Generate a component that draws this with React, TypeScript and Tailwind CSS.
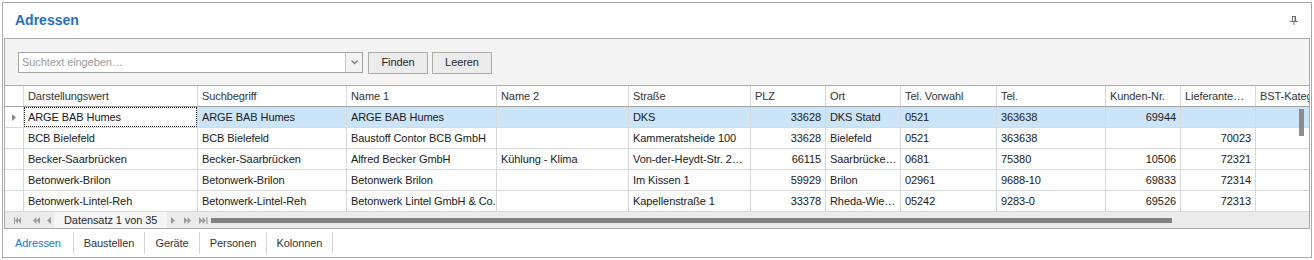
import React from 'react';

type Col = { key: string; label: string; w: string; right?: boolean };

const cols: Col[] = [
  { key: 'dw', label: 'Darstellungswert', w: 'w-[174px]' },
  { key: 'sb', label: 'Suchbegriff', w: 'w-[149px]' },
  { key: 'n1', label: 'Name 1', w: 'w-[150px]' },
  { key: 'n2', label: 'Name 2', w: 'w-[132px]' },
  { key: 'str', label: 'Straße', w: 'w-[122px]' },
  { key: 'plz', label: 'PLZ', w: 'w-[75px]', right: true },
  { key: 'ort', label: 'Ort', w: 'w-[75px]' },
  { key: 'vw', label: 'Tel. Vorwahl', w: 'w-[96px]' },
  { key: 'tel', label: 'Tel.', w: 'w-[109px]' },
  { key: 'kn', label: 'Kunden-Nr.', w: 'w-[75px]', right: true },
  { key: 'ln', label: 'Lieferante…', w: 'w-[75px]', right: true },
  { key: 'bst', label: 'BST-Kateg', w: 'w-[75px]' },
];

const rows: Record<string, string>[] = [
  { dw: 'ARGE BAB Humes', sb: 'ARGE BAB Humes', n1: 'ARGE BAB Humes', n2: '', str: 'DKS', plz: '33628', ort: 'DKS Statd', vw: '0521', tel: '363638', kn: '69944', ln: '', bst: '' },
  { dw: 'BCB Bielefeld', sb: 'BCB Bielefeld', n1: 'Baustoff Contor BCB GmbH', n2: '', str: 'Kammeratsheide 100', plz: '33628', ort: 'Bielefeld', vw: '0521', tel: '363638', kn: '', ln: '70023', bst: '' },
  { dw: 'Becker-Saarbrücken', sb: 'Becker-Saarbrücken', n1: 'Alfred Becker GmbH', n2: 'Kühlung - Klima', str: 'Von-der-Heydt-Str. 2…', plz: '66115', ort: 'Saarbrücke…', vw: '0681', tel: '75380', kn: '10506', ln: '72321', bst: '' },
  { dw: 'Betonwerk-Brilon', sb: 'Betonwerk-Brilon', n1: 'Betonwerk Brilon', n2: '', str: 'Im Kissen 1', plz: '59929', ort: 'Brilon', vw: '02961', tel: '9688-10', kn: '69833', ln: '72314', bst: '' },
  { dw: 'Betonwerk-Lintel-Reh', sb: 'Betonwerk-Lintel-Reh', n1: 'Betonwerk Lintel GmbH & Co.', n2: '', str: 'Kapellenstraße 1', plz: '33378', ort: 'Rheda-Wie…', vw: '05242', tel: '9283-0', kn: '69526', ln: '72313', bst: '' },
];

const tabs = [
  { label: 'Adressen', w: 'w-[71px]', active: true },
  { label: 'Baustellen', w: 'w-[71px]' },
  { label: 'Geräte', w: 'w-[55px]' },
  { label: 'Personen', w: 'w-[67px]' },
  { label: 'Kolonnen', w: 'w-[66px]' },
];

function NavIcon({ kind }: { kind: 'first' | 'prevPage' | 'prev' | 'next' | 'nextPage' | 'last' }) {
  const c = '#9a9a9a';
  if (kind === 'first')
    return (
      <svg width="7" height="7" viewBox="0 0 7 7">
        <rect x="0" y="0" width="1" height="7" fill={c} />
        <path d="M4 0 L1 3.5 L4 7 Z M7 0 L4 3.5 L7 7 Z" fill={c} />
      </svg>
    );
  if (kind === 'prevPage')
    return (
      <svg width="7" height="7" viewBox="0 0 7 7">
        <path d="M3.5 0 L0 3.5 L3.5 7 Z M7 0 L3.5 3.5 L7 7 Z" fill={c} />
      </svg>
    );
  if (kind === 'prev')
    return (
      <svg width="4" height="7" viewBox="0 0 4 7">
        <path d="M4 0 L0 3.5 L4 7 Z" fill={c} />
      </svg>
    );
  if (kind === 'next')
    return (
      <svg width="4" height="7" viewBox="0 0 4 7">
        <path d="M0 0 L4 3.5 L0 7 Z" fill={c} />
      </svg>
    );
  if (kind === 'nextPage')
    return (
      <svg width="7" height="7" viewBox="0 0 7 7">
        <path d="M0 0 L3.5 3.5 L0 7 Z M3.5 0 L7 3.5 L3.5 7 Z" fill={c} />
      </svg>
    );
  return (
    <svg width="9" height="7" viewBox="0 0 9 7">
      <path d="M0 0 L3.5 3.5 L0 7 Z M3.5 0 L7 3.5 L3.5 7 Z" fill={c} />
      <rect x="7.5" y="0" width="1" height="7" fill={c} />
    </svg>
  );
}

export default function App() {
  return (
    <div className="w-[1314px] h-[260px] bg-white p-[2px] font-['Liberation_Sans',Arial,sans-serif] text-[11px] tracking-[-0.08px] text-[#202020]">
      <div className="h-full border border-[#a9a9a9] flex flex-col">
        {/* title */}
        <div className="h-[35px] flex items-center justify-between pl-[12px] pr-[13px]">
          <span className="text-[14px] font-bold tracking-normal text-[#1e6fc3]">Adressen</span>
          <svg width="8" height="9" viewBox="0 0 8 9">
            <rect x="2.5" y="0.5" width="3" height="5" fill="none" stroke="#6f6f6f" />
            <rect x="4.5" y="0.5" width="1" height="5" fill="#6f6f6f" />
            <rect x="0" y="5" width="8" height="1" fill="#6f6f6f" />
            <rect x="3.5" y="6" width="1" height="3" fill="#6f6f6f" />
          </svg>
        </div>

        {/* main panel */}
        <div className="mx-px h-[191px] border border-[#a9a9a9] bg-[#f4f4f4] flex flex-col">
          <div className="h-[46px] flex items-center pl-[13px] pt-px">
            <div className="w-[345px] h-[21px] border border-[#a5a5a5] bg-white flex">
              <div className="flex-1 pl-[3px] leading-[19px] text-[#9c9c9c]">Suchtext eingeben…</div>
              <div className="w-[17px] border-l border-[#c4c4c4] bg-[#f3f3f3] flex items-center justify-center">
                <svg width="7" height="5" viewBox="0 0 7 5">
                  <path d="M0.5 0.5 L3.5 3.5 L6.5 0.5" fill="none" stroke="#7a7a7a" strokeWidth="1.3" />
                </svg>
              </div>
            </div>
            <button className="ml-[5px] w-[60px] h-[22px] border border-[#acacac] bg-[#ececec] text-[#262626] text-[11px]">Finden</button>
            <button className="ml-[4px] w-[60px] h-[22px] border border-[#acacac] bg-[#ececec] text-[#262626] text-[11px]">Leeren</button>
          </div>

          {/* grid */}
          <div className="relative overflow-hidden bg-white border-t border-[#a9a9a9]">
            <div className="flex h-[21px] border-b border-[#a0a0a0] text-[#333]">
              <div className="w-[19px] shrink-0 border-r border-[#d9d9d9]" />
              {cols.map((c) => (
                <div key={c.key} className={`${c.w} shrink-0 border-r border-[#d9d9d9] pl-[4px] leading-[20px] whitespace-nowrap overflow-hidden`}>
                  {c.label}
                </div>
              ))}
            </div>
            {rows.map((r, i) => {
              const sel = i === 0;
              return (
                <div key={i} className="flex h-[21px] border-b border-[#d9d9d9]">
                  <div className="w-[19px] shrink-0 border-r border-[#d9d9d9] flex items-center pl-[7px]">
                    {sel && (
                      <svg width="4" height="7" viewBox="0 0 4 7">
                        <path d="M0 0 L4 3.5 L0 7 Z" fill="#8a8a8a" />
                      </svg>
                    )}
                  </div>
                  {cols.map((c, j) => {
                    const focus = sel && j === 0;
                    return (
                      <div
                        key={c.key}
                        className={`${c.w} shrink-0 border-r border-[#d9d9d9] whitespace-nowrap overflow-hidden ${sel && !focus ? 'bg-[#cce4f7]' : ''}`}
                      >
                        {focus ? (
                          <div className="h-full border border-dotted border-[#222] px-[3px] leading-[18px]">{r[c.key]}</div>
                        ) : (
                          <div className={`h-full leading-[20px] ${c.right ? 'text-right pr-[4px]' : 'pl-[4px]'}`}>{r[c.key]}</div>
                        )}
                      </div>
                    );
                  })}
                </div>
              );
            })}
            {/* vertical scroll thumb */}
            <div className="absolute left-[1294px] top-[23px] w-[5px] h-[27px] bg-[#8c8c8c]" />
          </div>

          {/* navigator + horizontal scrollbar */}
          <div className="h-[16px] bg-[#ebebeb] flex items-center">
            <div className="flex items-center h-full">
              <div className="w-[22px] flex justify-center pl-[2px]"><NavIcon kind="first" /></div>
              <div className="w-[18px] flex justify-center"><NavIcon kind="prevPage" /></div>
              <div className="w-[8px] flex justify-center"><NavIcon kind="prev" /></div>
              <div className="h-full w-[113px] ml-px bg-[#f5f5f5] flex items-center pl-[10px] text-[#2a2a2a]">Datensatz 1 von 35</div>
              <div className="w-[12px] flex justify-center"><NavIcon kind="next" /></div>
              <div className="w-[16px] flex justify-center"><NavIcon kind="nextPage" /></div>
              <div className="w-[16px] flex justify-center"><NavIcon kind="last" /></div>
            </div>
            <div className="w-[961px] h-[5px] bg-[#808080]" />
          </div>
        </div>

        {/* tabs */}
        <div className="flex-1 flex items-center">
          {tabs.map((t) => (
            <div key={t.label} className={`${t.w} h-[22px] border-r border-[#d4d4d4] flex items-center justify-center ${t.active ? 'text-[#2277d0]' : 'text-[#333]'}`}>
              {t.label}
            </div>
          ))}
        </div>
      </div>
    </div>
  );
}
